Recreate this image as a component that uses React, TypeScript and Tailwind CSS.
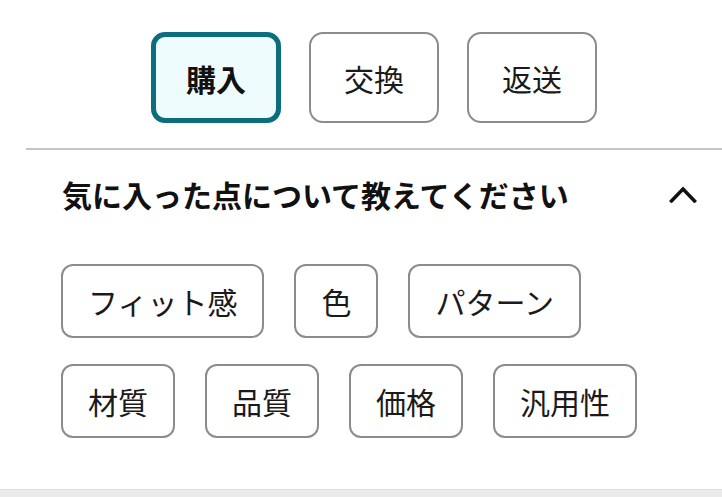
import React from 'react';

const TABS = ['購入', '交換', '返送'];
const ROW1 = ['フィット感', '色', 'パターン'];
const ROW2 = ['材質', '品質', '価格', '汎用性'];

function Chip({ label }: { label: string }) {
  return (
    <button className="flex h-[74px] items-center rounded-[12px] border-2 border-[#8c8c8c] bg-white px-[25px] text-[30px] leading-none text-[#1a1a1a]">
      {label}
    </button>
  );
}

export default function App() {
  return (
    <div
      className="flex h-[497px] w-[722px] flex-col bg-white"
      style={{ fontFamily: '"Noto Sans CJK JP", "Noto Sans", sans-serif' }}
    >
      <div className="flex flex-1 flex-col pl-[26px]">
        <div className="flex justify-center gap-[28px] pt-[32px]">
          {TABS.map((t, i) =>
            i === 0 ? (
              <button
                key={t}
                className="flex h-[91px] w-[130px] items-center justify-center rounded-[14px] border-[5px] border-[#0c6e7c] bg-[#effcfd] text-[30px] font-bold leading-none text-[#111]"
              >
                {t}
              </button>
            ) : (
              <button
                key={t}
                className="flex h-[91px] w-[130px] items-center justify-center rounded-[14px] border-2 border-[#8c8c8c] bg-white text-[30px] leading-none text-[#1a1a1a]"
              >
                {t}
              </button>
            ),
          )}
        </div>

        <div className="mt-[25px] h-[2px] bg-[#c4c4c4]" />

        <div className="flex items-center justify-between pl-[36px] pr-[25px] pt-[26px]">
          <h2 className="text-[30px] font-bold leading-[36px] text-[#111]">
            気に入った点について教えてください
          </h2>
          <svg width="28" height="18" viewBox="0 0 28 18" fill="none">
            <path d="M2.5 16 L14 4 L25.5 16" stroke="#111" strokeWidth="3.5" strokeLinecap="square" />
          </svg>
        </div>

        <div className="flex flex-col gap-[26px] pl-[35px] pt-[52px]">
          <div className="flex gap-[30px]">
            {ROW1.map((l) => (
              <Chip key={l} label={l} />
            ))}
          </div>
          <div className="flex gap-[30px]">
            {ROW2.map((l) => (
              <Chip key={l} label={l} />
            ))}
          </div>
        </div>
      </div>
      <div className="h-[8px] border-t border-[#dedede] bg-[#ebebeb]" />
    </div>
  );
}
